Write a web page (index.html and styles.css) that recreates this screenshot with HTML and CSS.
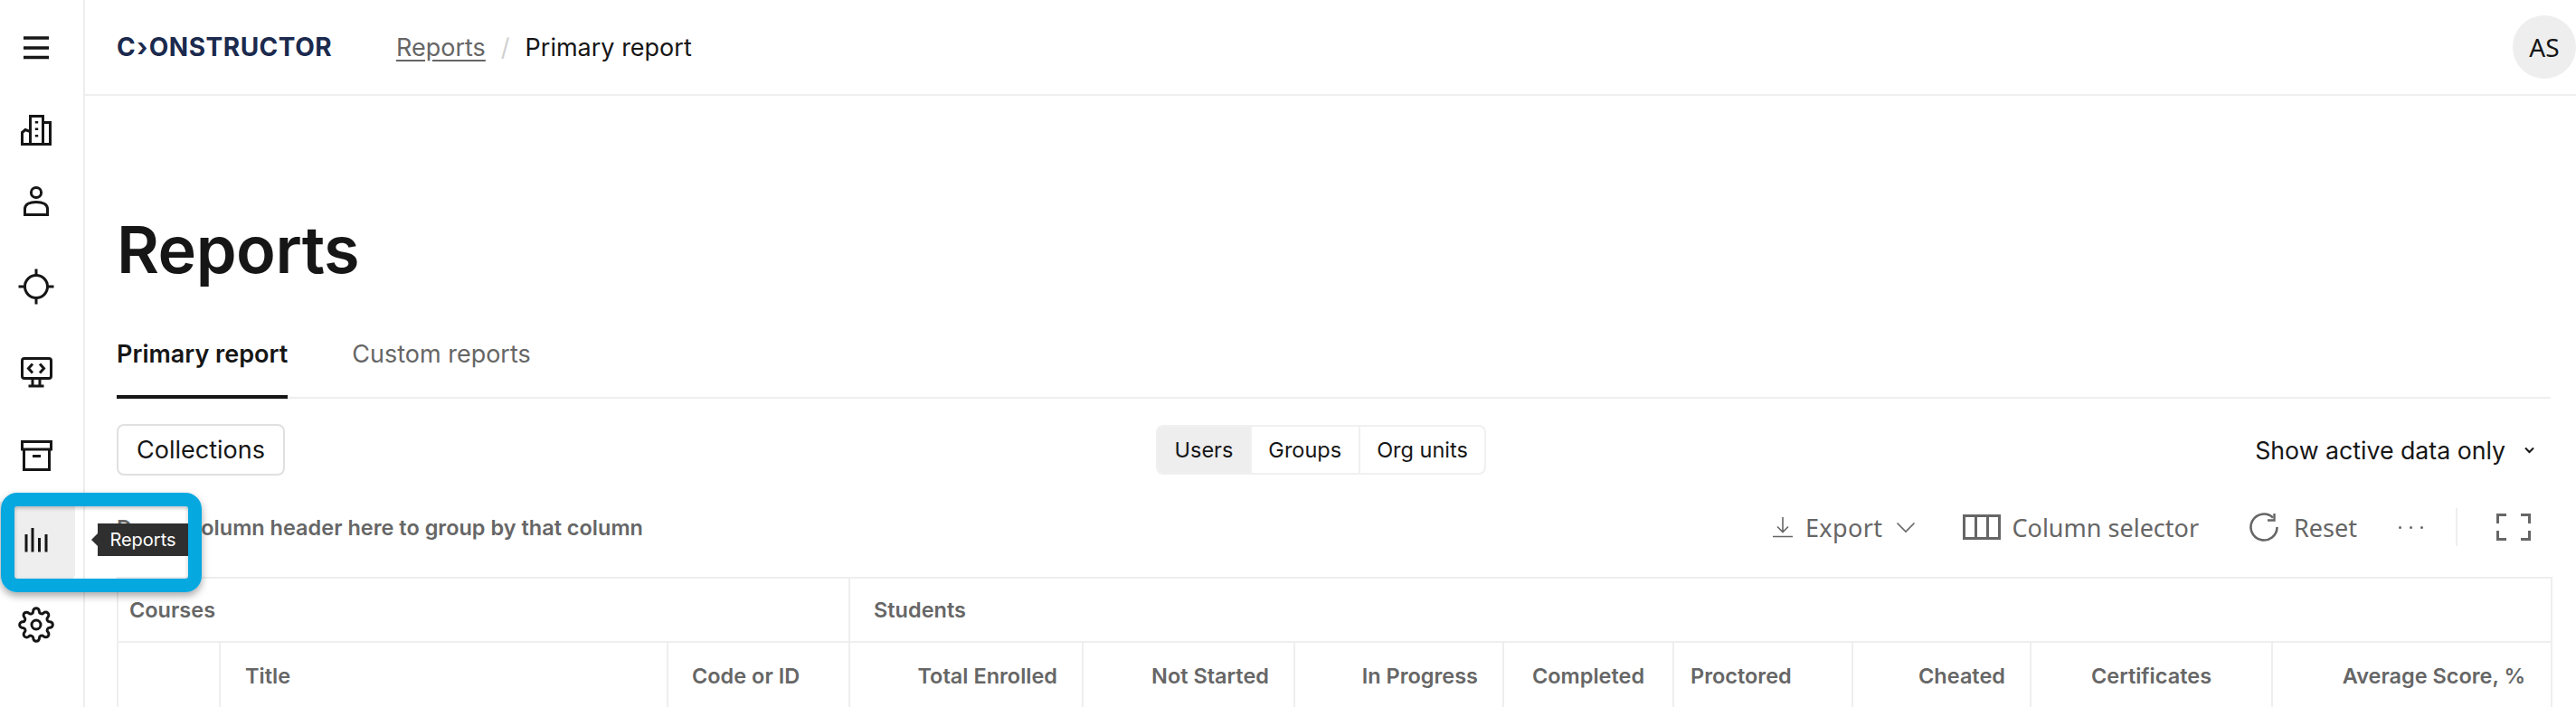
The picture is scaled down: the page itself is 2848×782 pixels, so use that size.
FILE: index.html
```html
<!DOCTYPE html>
<html lang="en">

<head>
    <meta charset="utf-8">
    <meta name="viewport" content="width=device-width, initial-scale=1.0">
    <title>Reports</title>
    <link rel="stylesheet" href="styles.css">
</head>

<body>
    <aside class="sidebar">
        <div class="burger">
            <svg width="48" height="48" viewBox="0 0 48 48" fill="none" stroke="#161616" stroke-width="3.4">
                <path d="M10 13H38M10 24H38M10 34.5H38" />
            </svg>
        </div>
        <nav class="nav">
            <a class="nav-item nav-tight">
                <svg width="48" height="48" viewBox="0 0 48 48" fill="none" stroke="#161616" stroke-width="3">
                    <path d="M8.5 41.5V28.5L12 25.5 L17.5 27.5V41.5M17.5 41.5V10.5H31.5V41.5M31.5 17.5H39.5V41.5H7" />
                    <path d="M24.5 16V18.5M24.5 23.5V26M24.5 31V33.5" stroke-width="3.4" />
                </svg>
            </a>
            <a class="nav-item">
                <svg width="48" height="48" viewBox="0 0 48 48" fill="none" stroke="#161616" stroke-width="3">
                    <circle cx="24" cy="15" r="5.6" />
                    <path d="M11.5 39.5V33C11.5 28 17 25.5 24 25.5S36.500 28 36.500 33V39.500Z" />
                </svg>
            </a>
            <a class="nav-item">
                <svg width="48" height="48" viewBox="0 0 48 48" fill="none" stroke="#161616" stroke-width="3">
                    <circle cx="24" cy="24" r="12.500" />
                    <path d="M24 4.500V11.500M24 36.500V43.500M4.500 24H11.500M36.500 24H43.500" />
                </svg>
            </a>
            <a class="nav-item">
                <svg width="48" height="48" viewBox="0 0 48 48" fill="none" stroke="#161616" stroke-width="3">
                    <rect x="8.500" y="9.500" width="32" height="22" rx="2.500" />
                    <path d="M20 15.500L15.500 20.500L20 25.500M28 15.500L32.500 20.500L28 25.500M20 31.500V39M28 31.500V39M15.500 40H32.500" />
                </svg>
            </a>
            <a class="nav-item">
                <svg width="48" height="48" viewBox="0 0 48 48" fill="none" stroke="#161616" stroke-width="3">
                    <path d="M8.500 8.500H40.500V17H8.500ZM10.500 17V39.500H38.500V17" />
                    <path d="M20 24.500H29" />
                </svg>
            </a>
            <a class="nav-item nav-active">
                <svg width="48" height="48" viewBox="0 0 48 48" fill="none" stroke="#161616" stroke-width="3">
                    <path d="M13 17V36.500M20 10V36.500M27.500 21V36.500M35 17V36.500" />
                </svg>
            </a>
            <a class="nav-item">
                <svg width="40" height="40" viewBox="0 0 24 24" fill="none" stroke="#161616" stroke-width="1.800" stroke-linejoin="round">
                    <circle cx="12" cy="12" r="3" />
                    <path d="M19.400 15a1.650 1.650 0 0 0 .33 1.820l.06.06a2 2 0 0 1 0 2.830 2 2 0 0 1-2.830 0l-.06-.06a1.650 1.650 0 0 0-1.820-.33 1.650 1.650 0 0 0-1 1.510V21a2 2 0 0 1-2 2 2 2 0 0 1-2-2v-.09A1.650 1.650 0 0 0 9 19.400a1.650 1.650 0 0 0-1.820.33l-.06.06a2 2 0 0 1-2.830 0 2 2 0 0 1 0-2.830l.06-.06a1.650 1.650 0 0 0 .33-1.820 1.650 1.650 0 0 0-1.510-1H3a2 2 0 0 1-2-2 2 2 0 0 1 2-2h.09A1.650 1.650 0 0 0 4.600 9a1.650 1.650 0 0 0-.33-1.820l-.06-.06a2 2 0 0 1 0-2.830 2 2 0 0 1 2.830 0l.06.06a1.650 1.650 0 0 0 1.820.33H9a1.650 1.650 0 0 0 1-1.510V3a2 2 0 0 1 2-2 2 2 0 0 1 2 2v.09a1.650 1.650 0 0 0 1 1.510 1.650 1.650 0 0 0 1.820-.33l.06-.06a2 2 0 0 1 2.830 0 2 2 0 0 1 0 2.830l-.06.06a1.650 1.650 0 0 0-.33 1.820V9a1.650 1.650 0 0 0 1.510 1H21a2 2 0 0 1 2 2 2 2 0 0 1-2 2h-.09a1.650 1.650 0 0 0-1.510 1z" />
                </svg>
            </a>
        </nav>
    </aside>

    <div class="page">
        <header class="topbar">
            <div class="logo">C<span class="logo-arrow">›</span>ONSTRUCTOR</div>
            <nav class="crumbs">
                <a class="crumb-link">Reports</a>
                <span class="crumb-sep">/</span>
                <span>Primary report</span>
            </nav>
            <div class="avatar">AS</div>
        </header>

        <main class="content">
            <h1>Reports</h1>
            <div class="tabs">
                <a class="tab tab-active">Primary report</a>
                <a class="tab">Custom reports</a>
            </div>

            <div class="filters">
                <button class="collections">Collections</button>
                <div class="segments">
                    <button class="segment segment-on">Users</button>
                    <button class="segment">Groups</button>
                    <button class="segment">Org units</button>
                </div>
                <div class="active-only">
                    <span>Show active data only</span>
                    <svg width="13" height="8" viewBox="0 0 13 8" fill="none" stroke="#161616" stroke-width="2">
                        <path d="M2 1.500L6.500 6L11 1.500" />
                    </svg>
                </div>
            </div>

            <div class="toolbar">
                <div class="group-hint">Drag a column header here to group by that column</div>
                <div class="tools">
                    <a class="tool tool-export">
                        <svg width="24" height="24" viewBox="0 0 24 24" fill="none" stroke="#666" stroke-width="1.600">
                            <path d="M12 1V17M6 11.500L12 17.500L18 11.500M1 22.500H23" />
                        </svg>
                        <span class="export-label">Export</span>
                        <svg class="tool-chevron" width="22" height="13" viewBox="0 0 22 13" fill="none" stroke="#666" stroke-width="1.600">
                            <path d="M1.500 1.500L11 11L20.500 1.500" />
                        </svg>
                    </a>
                    <a class="tool tool-columns">
                        <svg width="42" height="28" viewBox="0 0 42 28" fill="none" stroke="#666" stroke-width="3">
                            <path d="M1.500 1.500H40.500V26.500H1.500ZM14.500 1.500V26.500M27.500 1.500V26.500" />
                        </svg>
                        <span>Column selector</span>
                    </a>
                    <a class="tool tool-reset">
                        <svg width="34" height="32" viewBox="0 0 34 32" fill="none" stroke="#666" stroke-width="2.600">
                            <path d="M27 5.500A14.500 14.500 0 1 0 31.500 16" />
                            <path d="M28.500 1V8.500H21" stroke-width="2.400" />
                        </svg>
                        <span>Reset</span>
                    </a>
                    <a class="tool-more">
                        <i></i><i></i><i></i>
                    </a>
                    <span class="tool-divider"></span>
                    <a class="tool-full">
                        <svg width="38" height="30" viewBox="0 0 38 30" fill="none" stroke="#666" stroke-width="3">
                            <path d="M11 1.500H1.500V11M27 1.500H36.500V11M11 28.500H1.500V19M27 28.500H36.500V19" />
                        </svg>
                    </a>
                </div>
            </div>

            <table class="grid">
                <colgroup>
                    <col class="w-113"><col class="w-495"><col class="w-201"><col class="w-258"><col class="w-234"><col class="w-231"><col class="w-188"><col class="w-198"><col class="w-197"><col class="w-267"><col class="w-309">
                </colgroup>
                <thead>
                    <tr class="band">
                        <th colspan="3">Courses</th>
                        <th colspan="8" class="band-students">Students</th>
                    </tr>
                    <tr class="heads">
                        <th></th>
                        <th class="pad-left">Title</th>
                        <th class="pad-code">Code or ID</th>
                        <th class="num">Total Enrolled</th>
                        <th class="num">Not Started</th>
                        <th class="num">In Progress</th>
                        <th class="mid">Completed</th>
                        <th class="tight-left">Proctored</th>
                        <th class="num">Cheated</th>
                        <th class="mid">Certificates</th>
                        <th class="num num-last">Average Score, %</th>
                    </tr>
                </thead>
            </table>
        </main>
    </div>

    <!-- callout drawn over the screenshot -->
    <div class="callout"></div>
    <div class="tooltip">Reports</div>
</body>

</html>
```

FILE: styles.css
```css
* {
    box-sizing: border-box;
}

html,
body {
    margin: 0;
    height: 782px;
    overflow: hidden;
}

body {
    display: flex;
    background: #fff;
    color: #161616;
    font-family: Inter, "Noto Sans", sans-serif;
}

button {
    font-family: inherit;
    color: inherit;
    background: none;
    border: 0;
    padding: 0;
}

/* sidebar */

.sidebar {
    flex: none;
    width: 94px;
    border-right: 2px solid #eeeeee;
}

.burger {
    height: 102px;
    padding-left: 16px;
    padding-top: 29px;
}

.burger svg,
.nav-item svg {
    display: block;
}

.nav {
    display: flex;
    flex-direction: column;
    gap: 13.500px;
}

.nav-item {
    display: flex;
    align-items: center;
    justify-content: center;
    width: 80px;
    height: 80px;
}

.nav-tight {
    margin-bottom: -13.500px;
}

.nav-item:nth-child(2) {
    margin-bottom: 1.500px;
}

.nav-active {
    width: 83px;
    height: 86px;
    margin-top: -3px;
    margin-bottom: -3px;
    padding-right: 3px;
    background: #eeeeee;
    border-radius: 0 6px 6px 0;
}

/* top bar */

.page {
    flex: 1;
    min-width: 0;
}

.topbar {
    display: flex;
    align-items: center;
    height: 106px;
    padding-left: 35px;
    border-bottom: 2px solid #eeeeee;
}

.logo {
    width: 309px;
    font-size: 28px;
    font-weight: 700;
    letter-spacing: 0.5px;
    color: #1b2a4e;
    white-space: nowrap;
}

.logo-arrow {
    margin: 0 1px;
}

.crumbs {
    display: flex;
    align-items: center;
    gap: 17px;
    font-size: 27px;
}

.crumb-link {
    color: #666;
    text-decoration: underline;
    text-underline-offset: 4px;
}

.crumb-sep {
    color: #d0d0d0;
}

.avatar {
    flex: none;
    display: flex;
    align-items: center;
    justify-content: center;
    width: 70px;
    height: 70px;
    margin-left: auto;
    border-radius: 50%;
    background: #eeeeee;
    font-family: "Noto Sans", sans-serif;
    font-size: 28px;
}

/* content */

.content {
    padding: 126px 28px 0 35px;
}

h1 {
    margin: 0 0 40px;
    font-size: 72px;
    line-height: 88px;
    font-weight: 600;
    letter-spacing: -0.5px;
}

.tabs {
    display: flex;
    gap: 71px;
    height: 81px;
    border-bottom: 2px solid #eeeeee;
}

.tab {
    height: 81px;
    padding-top: 15px;
    font-size: 27px;
    line-height: 34px;
    color: #666;
}

.tab-active {
    font-weight: 600;
    color: #161616;
    border-bottom: 4px solid #161616;
}

.filters {
    display: flex;
    align-items: center;
    height: 57px;
    margin-top: 28px;
    padding-right: 17px;
}

.collections {
    width: 186px;
    height: 57px;
    border: 2px solid #e0e0e0;
    border-radius: 8px;
    font-size: 27px;
}

.segments {
    display: flex;
    height: 55px;
    margin-left: 963px;
    border: 2px solid #f0f0f0;
    border-radius: 8px;
}

.segment {
    padding: 0 18.500px;
    font-size: 23.500px;
    border-left: 2px solid #f0f0f0;
}

.segment:first-child {
    border-left: 0;
}

.segment-on {
    background: #eeeeee;
    border-radius: 6px 0 0 6px;
}

.active-only {
    display: flex;
    align-items: center;
    gap: 20px;
    margin-left: auto;
    font-size: 26.700px;
}

.toolbar {
    display: flex;
    align-items: center;
    height: 44px;
    margin-top: 35px;
    padding-right: 22px;
}

.group-hint {
    font-size: 23.500px;
    font-weight: 600;
    color: #666;
}

.tools {
    display: flex;
    align-items: center;
    margin-left: auto;
    color: #666;
    font-family: "Noto Sans", sans-serif;
    font-size: 27px;
}

.tool {
    display: flex;
    align-items: center;
}

.tool svg {
    display: block;
}

.tool-export {
    gap: 13px;
}

.export-label {
    letter-spacing: 0.4px;
}

.tool-export .tool-chevron {
    margin-left: 1px;
}

.tool-columns {
    gap: 13px;
    margin-left: 52px;
}

.tool-reset {
    gap: 16px;
    margin-left: 55px;
}

.tool-more {
    display: flex;
    gap: 9px;
    margin-left: 46px;
}

.tool-more i {
    width: 3px;
    height: 3px;
    border-radius: 50%;
    background: #666;
}

.tool-divider {
    width: 2px;
    height: 42px;
    margin-left: 36px;
    background: #eeeeee;
}

.tool-full {
    margin-left: 43px;
}

.tool-full svg {
    display: block;
}

/* table */

.grid {
    width: 2691px;
    margin-top: 33px;
    border-collapse: collapse;
    table-layout: fixed;
    color: #666;
    font-size: 23.500px;
}

.w-113 { width: 113px; }
.w-495 { width: 495px; }
.w-201 { width: 201px; }
.w-258 { width: 258px; }
.w-234 { width: 234px; }
.w-231 { width: 231px; }
.w-188 { width: 188px; }
.w-198 { width: 198px; }
.w-197 { width: 197px; }
.w-267 { width: 267px; }
.w-309 { width: 309px; }

.grid th {
    font-weight: 600;
    text-align: left;
    border: 2px solid #eeeeee;
}

.band th {
    height: 71px;
    padding-left: 12px;
}

.band .band-students {
    padding-left: 26px;
}

.heads th {
    height: 74px;
    padding: 0;
}

.heads .pad-left {
    padding-left: 27px;
}

.heads .pad-code {
    padding-left: 26px;
}

.heads .tight-left {
    padding-left: 18px;
}

.heads .num {
    padding-right: 27px;
    text-align: right;
}

.heads .num-last {
    padding-right: 28px;
}

.heads .mid {
    text-align: center;
}

/* callout over the nav item */

.callout {
    position: absolute;
    left: 1px;
    top: 545px;
    width: 222px;
    height: 110px;
    border: 15px solid #06a8e0;
    border-radius: 18px;
    box-shadow: 0 4px 9px rgba(0, 0, 0, 0.35), inset 0 2px 4px rgba(0, 0, 0, 0.25);
}

.tooltip {
    position: absolute;
    left: 108px;
    top: 579px;
    width: 100px;
    height: 36px;
    background: #2f2f2f;
    color: #fff;
    font-size: 20px;
    line-height: 36px;
    text-align: center;
}

.tooltip::before {
    content: "";
    position: absolute;
    left: -7px;
    top: 11px;
    border-style: solid;
    border-width: 7px 7px 7px 0;
    border-color: transparent #2f2f2f transparent transparent;
}
```
